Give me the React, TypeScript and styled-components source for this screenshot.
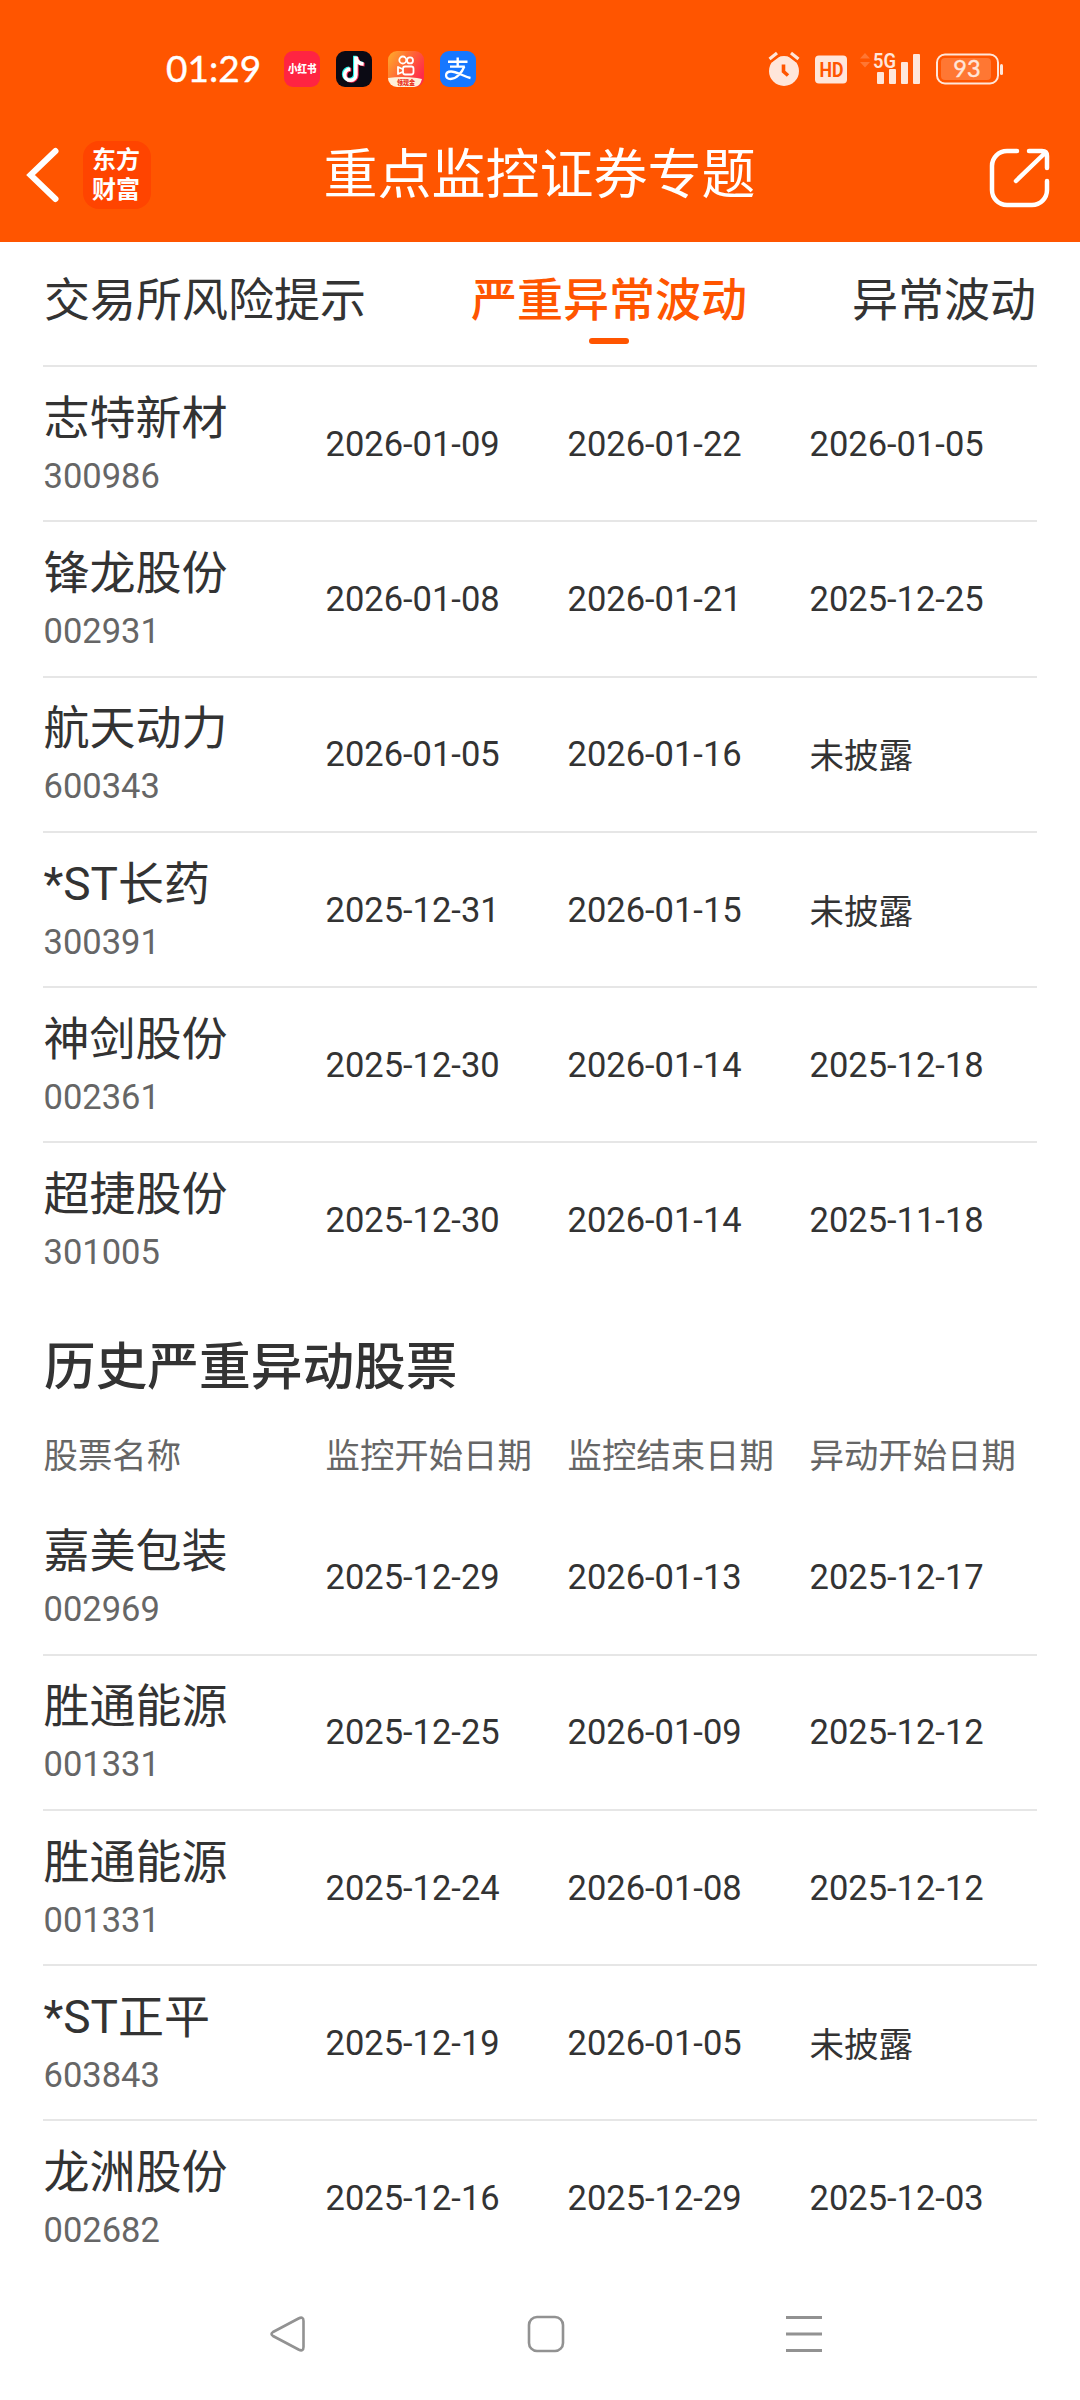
import React from 'react';
import styled, { createGlobalStyle } from 'styled-components';

const GlobalStyle = createGlobalStyle`
  * { box-sizing: border-box; }
  body {
    margin: 0;
    background: #fff;
    color: #333;
    font-family: Roboto, 'Noto Sans CJK SC', sans-serif;
  }
`;

const Screen = styled.div`
  width: 1080px;
  height: 2400px;
  display: flex;
  flex-direction: column;
  overflow: hidden;
  background: #fff;
`;

const Top = styled.header`
  height: 242px;
  flex: none;
  background: #ff5500;
  color: #fff;
`;

const StatusBar = styled.div`
  height: 108px;
  padding: 30px 77px 0 166px;
  display: flex;
  justify-content: space-between;
`;

const StatusGroup = styled.div<{ $gap: number }>`
  display: flex;
  align-items: center;
  height: 78px;
  gap: ${(p) => p.$gap}px;
`;

const Clock = styled.span`
  width: 102px;
  padding-bottom: 2px;
  font: 400 37px/44px Lato, sans-serif;
  -webkit-text-stroke: 0.4px #fff;
  white-space: nowrap;
`;

const TitleBar = styled.div`
  height: 134px;
  padding: 0 29px 0 26px;
  display: grid;
  grid-template-columns: 1fr auto 1fr;
  align-items: center;
`;

const TitleLeft = styled.div`
  display: flex;
  align-items: center;
  gap: 23px;
`;

const AppLogo = styled.div`
  width: 68px;
  height: 68px;
  padding: 2px 10px 0 9px;
  border-radius: 16px;
  background: #ff4400;
  font: 700 24px/30px 'Noto Sans CJK SC', sans-serif;
  word-break: break-all;
`;

const Title = styled.h1`
  margin: 0;
  padding: 2px 0 0 2px;
  font-size: 54px;
  line-height: 64px;
  font-weight: 400;
`;

const ShareButton = styled.button`
  justify-self: end;
  padding: 6px 0 0;
  border: 0;
  background: none;
  display: flex;
`;

const Content = styled.main`
  flex: none;
  padding: 0 43px;
`;

const Tabs = styled.nav`
  height: 125px;
  padding: 28px 1px 0 1px;
  display: flex;
  justify-content: space-between;
  border-bottom: 2px solid #e6e6e6;
`;

const Tab = styled.a<{ $active?: boolean }>`
  display: flex;
  flex-direction: column;
  align-items: center;
  gap: 8px;
  font-size: 46px;
  line-height: 60px;
  font-weight: ${(p) => (p.$active ? 500 : 400)};
  color: ${(p) => (p.$active ? '#ff5500' : '#333')};

  &::after {
    content: '';
    width: 40px;
    height: 6px;
    border-radius: 3px;
    background: ${(p) => (p.$active ? '#ff5500' : 'transparent')};
  }
`;

const Row = styled.div`
  height: 155.3px;
  padding-left: 0.5px;
  display: grid;
  grid-template-columns: 282px 242px 242px 1fr;
  align-items: center;
  border-bottom: 2px solid #e6e6e6;

  &:last-child {
    border-bottom-color: transparent;
  }
`;

const HeadRow = styled.div`
  height: 69.5px;
  padding-left: 0.5px;
  display: grid;
  grid-template-columns: 282px 242px 242px 1fr;
  font-size: 34.4px;
  line-height: 50px;
  color: #666;
`;

const Stock = styled.div`
  display: flex;
  flex-direction: column;
`;

const StockName = styled.span`
  margin-top: -1px;
  padding-bottom: 1px;
  font-size: 46px;
  line-height: 64px;
`;

const StockCode = styled.span`
  font-size: 34.5px;
  line-height: 50px;
  color: #666;
`;

const DateCell = styled.span<{ $text: boolean }>`
  padding-top: ${(p) => (p.$text ? 4 : 0)}px;
  font-size: 34.5px;
  line-height: 50px;
`;

const SectionTitle = styled.h2`
  margin: 0;
  height: 132px;
  padding: 34px 0 0 1px;
  font-size: 51.7px;
  line-height: 70px;
  font-weight: 500;
`;

const NavBar = styled.footer`
  flex: 1;
  display: flex;
  align-items: center;
  justify-content: space-between;
  padding: 0 257px 9px 269px;
`;

type Stocks = [string, string, string, string, string][];

const current: Stocks = [
  ['志特新材', '300986', '2026-01-09', '2026-01-22', '2026-01-05'],
  ['锋龙股份', '002931', '2026-01-08', '2026-01-21', '2025-12-25'],
  ['航天动力', '600343', '2026-01-05', '2026-01-16', '未披露'],
  ['*ST长药', '300391', '2025-12-31', '2026-01-15', '未披露'],
  ['神剑股份', '002361', '2025-12-30', '2026-01-14', '2025-12-18'],
  ['超捷股份', '301005', '2025-12-30', '2026-01-14', '2025-11-18'],
];

const history: Stocks = [
  ['嘉美包装', '002969', '2025-12-29', '2026-01-13', '2025-12-17'],
  ['胜通能源', '001331', '2025-12-25', '2026-01-09', '2025-12-12'],
  ['胜通能源', '001331', '2025-12-24', '2026-01-08', '2025-12-12'],
  ['*ST正平', '603843', '2025-12-19', '2026-01-05', '未披露'],
  ['龙洲股份', '002682', '2025-12-16', '2025-12-29', '2025-12-03'],
];

const StockList = ({ items }: { items: Stocks }) => (
  <div>
    {items.map(([name, code, ...dates], i) => (
      <Row key={i}>
        <Stock>
          <StockName>{name}</StockName>
          <StockCode>{code}</StockCode>
        </Stock>
        {dates.map((d, j) => (
          <DateCell key={j} $text={!d.startsWith('20')}>{d}</DateCell>
        ))}
      </Row>
    ))}
  </div>
);

const cjk = "'Noto Sans CJK SC', sans-serif";

const RedNoteIcon = () => (
  <svg width="36" height="36" viewBox="0 0 36 36">
    <rect width="36" height="36" rx="9" fill="#ff2442" />
    <text x="4" y="22.300" fontSize="11" fontWeight="900" fontFamily={cjk} fill="#fff" textLength="28.500" lengthAdjust="spacingAndGlyphs">小红书</text>
  </svg>
);

const note = 'M19.500 5v18.200a5.600 5.600 0 1 1-5.600-5.600M19.500 5c.4 4.600 3.500 7.300 7.700 7.500';

const DouyinIcon = () => (
  <svg width="36" height="36" viewBox="0 0 36 36" fill="none" strokeWidth="3.600">
    <rect width="36" height="36" rx="9" fill="#0b0a14" />
    <path d={note} stroke="#25f4ee" transform="translate(-.7 -.2)" />
    <path d={note} stroke="#fe2c55" transform="translate(1.400 1.100)" />
    <path d={note} stroke="#fff" transform="translate(.4 .5)" />
  </svg>
);

const KuaishouIcon = () => (
  <svg width="36" height="36" viewBox="0 0 36 36">
    <defs>
      <linearGradient id="ks" x1="0" y1="0" x2="1" y2="0.6">
        <stop offset="0" stopColor="#ffae2b" />
        <stop offset="0.5" stopColor="#ff6a35" />
        <stop offset="1" stopColor="#ff2b4a" />
      </linearGradient>
      <clipPath id="ksClip"><rect width="36" height="36" rx="9" /></clipPath>
    </defs>
    <g clipPath="url(#ksClip)">
      <rect width="36" height="36" fill="url(#ks)" />
      <path d="M0 27Q14 25 29 27L34 28Q32 36 26 36H0Z" fill="#fff0d8" />
      <g fill="none" stroke="#fff" strokeWidth="1.800">
        <circle cx="14.800" cy="9" r="3.500" />
        <circle cx="22" cy="9.400" r="3" />
        <rect x="15" y="15.500" width="10.500" height="8" rx="2.200" />
        <path d="M15 18.300L10 16v7l5-2.300" strokeLinejoin="round" />
      </g>
      <text x="9" y="33.500" fontSize="6.500" fontWeight="900" fontFamily={cjk} fill="#e8301c" textLength="18" lengthAdjust="spacingAndGlyphs">领现金</text>
    </g>
  </svg>
);

const AlipayIcon = () => (
  <svg width="36" height="36" viewBox="0 0 36 36" fill="none" stroke="#fff">
    <rect width="36" height="36" rx="9" fill="#1677ff" stroke="none" />
    <path d="M8 10.800H27.500M17.700 6.500V15.500M10 15.600H24.800" strokeWidth="2.400" />
    <path d="M24.300 15.500C22 21.500 16.500 28 10.500 28C4.500 28 4.500 20.500 11 20.500C17 20.500 23 25.500 30.500 27" strokeWidth="2.300" />
  </svg>
);

const pale = '#ffe6da';

const AlarmIcon = () => (
  <svg width="34" height="36" viewBox="0 0 34 36">
    <circle cx="16" cy="20" r="15" fill={pale} />
    <path d="M2 8.500L10 2.500M30 8.500L22 2.500" stroke="#ff5500" strokeWidth="7" />
    <path d="M1.500 8L9 2M30.500 8L23 2" stroke={pale} strokeWidth="3.200" />
    <path d="M15.500 13.500V20.500L20 24.500" stroke="#ff5500" strokeWidth="3.600" fill="none" />
  </svg>
);

const HdIcon = () => (
  <svg width="32" height="32" viewBox="0 -2.500 32 32">
    <rect width="32" height="28" rx="4" fill={pale} />
    <text x="4.500" y="21.500" fontSize="21" fontWeight="700" fontFamily="Roboto, sans-serif" fill="#ff5500" textLength="24" lengthAdjust="spacingAndGlyphs">HD</text>
  </svg>
);

const SignalIcon = () => (
  <svg width="60" height="50" viewBox="0 -8 60 50">
    <path d="M0 6.500L5 1L10 6.500ZM0 10H10L5 15.500Z" fill="#ff7733" />
    <text x="13" y="15.500" fontSize="20.500" fontWeight="600" fontFamily="Roboto, sans-serif" fill={pale} textLength="23" lengthAdjust="spacingAndGlyphs">5G</text>
    <g fill={pale}>
      <rect x="17" y="20" width="7" height="12" rx="1" />
      <rect x="29" y="17" width="7" height="15" rx="1" />
      <rect x="41" y="10" width="7" height="22" rx="1" />
      <rect x="53" y="2" width="7" height="30" rx="1" />
    </g>
  </svg>
);

const BatterySvg = styled.svg`
  margin-left: 3px;
`;

const BatteryIcon = () => (
  <BatterySvg width="67" height="32" viewBox="0 0 67 32">
    <rect x="1" y="1.500" width="61" height="29" rx="8" fill="none" stroke={pale} strokeWidth="2" />
    <rect x="5" y="5" width="50" height="22" rx="4" fill="#ff7733" />
    <rect x="64" y="11" width="3" height="11" rx="1.500" fill={pale} />
    <text x="31" y="24" fontSize="23.500" fontFamily="Lato, sans-serif" fill={pale} stroke={pale} strokeWidth=".4" textAnchor="middle">93</text>
  </BatterySvg>
);

export default function App() {
  return (
    <Screen>
      <GlobalStyle />
      <Top>
        <StatusBar>
          <StatusGroup $gap={16}>
            <Clock>01:29</Clock>
            <RedNoteIcon />
            <DouyinIcon />
            <KuaishouIcon />
            <AlipayIcon />
          </StatusGroup>
          <StatusGroup $gap={13}>
            <AlarmIcon />
            <HdIcon />
            <SignalIcon />
            <BatteryIcon />
          </StatusGroup>
        </StatusBar>
        <TitleBar>
          <TitleLeft>
            <svg width="34" height="58" viewBox="0 0 34 58" fill="none" stroke="#fff" strokeWidth="6" strokeLinecap="round">
              <path d="M29.500 5L4.500 29L29.500 53" />
            </svg>
            <AppLogo>东方财富</AppLogo>
          </TitleLeft>
          <Title>重点监控证券专题</Title>
          <ShareButton>
            <svg width="62" height="62" viewBox="0 0 62 62" fill="none" stroke="#fff" strokeWidth="4.500" strokeLinecap="round" strokeLinejoin="round">
              <path d="M28 4H18A15 15 0 0 0 3 19V43A15 15 0 0 0 18 58H43A15 15 0 0 0 58 43V34" />
              <path d="M40 4H53Q58 4 58 9V21M27 34L56 6" />
            </svg>
          </ShareButton>
        </TitleBar>
      </Top>
      <Content>
        <Tabs>
          <Tab>交易所风险提示</Tab>
          <Tab $active>严重异常波动</Tab>
          <Tab>异常波动</Tab>
        </Tabs>
        <StockList items={current} />
        <SectionTitle>历史严重异动股票</SectionTitle>
        <HeadRow>
          <span>股票名称</span>
          <span>监控开始日期</span>
          <span>监控结束日期</span>
          <span>异动开始日期</span>
        </HeadRow>
        <StockList items={history} />
      </Content>
      <NavBar>
        <svg width="38" height="50" viewBox="0 0 38 50" fill="none" stroke="#929292" strokeWidth="2.600" strokeLinejoin="round">
          <path d="M29.500 9.500L4 23Q1 25 4 27L29.500 40.500Q34.500 43 34.500 38V12Q34.500 7 29.500 9.500Z" />
        </svg>
        <svg width="38" height="38" viewBox="0 0 38 38" fill="none" stroke="#929292" strokeWidth="2.600">
          <rect x="2" y="2" width="34" height="34" rx="8" />
        </svg>
        <svg width="38" height="38" viewBox="0 0 38 38" stroke="#929292" strokeWidth="3">
          <path d="M1 2.500H37M1 19H37M1 35.500H37" />
        </svg>
      </NavBar>
    </Screen>
  );
}
